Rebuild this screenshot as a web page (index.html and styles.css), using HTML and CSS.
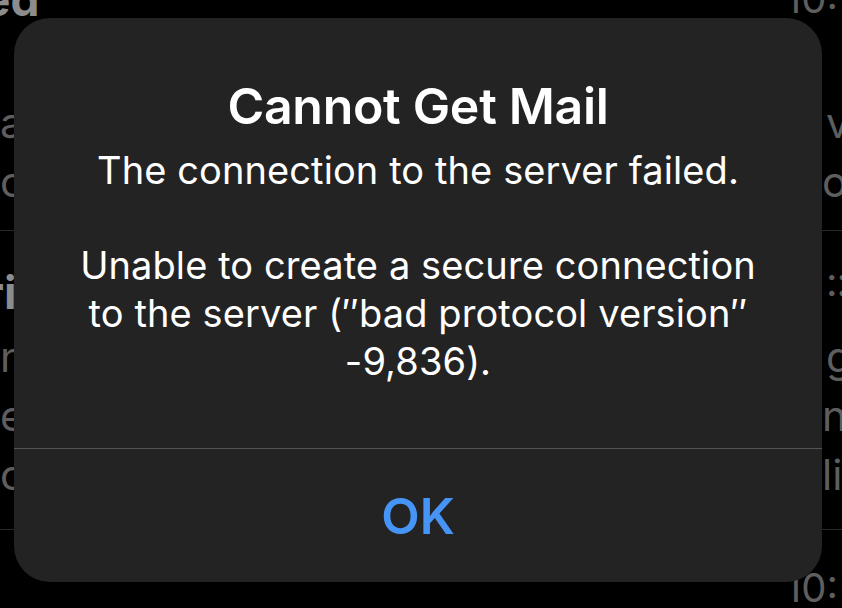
FILE: index.html
```html
<!DOCTYPE html>
<html lang="en">
<head>
<meta charset="utf-8">
<title>Cannot Get Mail</title>
<link rel="stylesheet" href="styles.css">
</head>
<body>
<div class="screen">
  <div class="list">
    <div class="mail mail-first">
      <div class="head"><span class="sender sender-first">ed</span><span class="time">10:</span></div>
      <div class="line"><span class="l"></span><span class="r"></span></div>
      <div class="line"><span class="l">a</span><span class="r r-v">v</span></div>
      <div class="line"><span class="l">o</span><span class="r">ol</span></div>
    </div>
    <div class="mail mail-second">
      <div class="head"><span class="sender sender-second">ri</span><span class="time time-colon">::</span></div>
      <div class="line"><span class="l">n</span><span class="r r-g">g</span></div>
      <div class="line"><span class="l">el</span><span class="r">n</span></div>
      <div class="line"><span class="l">c</span><span class="r">li</span></div>
    </div>
    <div class="mail mail-third">
      <div class="head"><span class="sender"></span><span class="time">10:</span></div>
    </div>
  </div>

  <div class="alert" role="alertdialog" aria-labelledby="alert-title">
    <div class="alert-body">
      <h1 class="alert-title" id="alert-title">Cannot Get Mail</h1>
      <p class="alert-msg">The connection to the server failed.<br><br>Unable to create a secure connection<br>to the server (″bad protocol version″<br>-9,836).</p>
    </div>
    <button class="alert-btn" type="button">OK</button>
  </div>
</div>
</body>
</html>
```

FILE: styles.css
```css
* { box-sizing: border-box; }

html, body {
  margin: 0;
  padding: 0;
  background: #000;
}

body {
  font-family: Inter, "Noto Sans", "Liberation Sans", sans-serif;
  overflow: hidden;
}

.screen {
  position: relative;
  width: 842px;
  height: 608px;
  overflow: hidden;
  background: #000;
}

/* ---------- mail list behind the alert ---------- */
.list {
  display: flex;
  flex-direction: column;
  margin-top: -31px;
}

.mail {
  display: flex;
  flex-direction: column;
  border-bottom: 1px solid #282828;
}

.mail-first { padding-bottom: 19px; }
.mail-second { padding-top: 31px; padding-bottom: 25px; }
.mail-third { padding-top: 28px; border-bottom: none; }

.head {
  display: flex;
  justify-content: space-between;
  align-items: flex-start;
  height: 60px;
  white-space: nowrap;
}

.sender {
  font-size: 46px;
  font-weight: 700;
  line-height: 60px;
  color: #8c8c8c;
}

.sender-first { margin-left: -17px; }
.sender-second { margin-left: -15px; }

.time {
  width: 57px;
  font-size: 40px;
  line-height: 60px;
  color: #5e5e5e;
  white-space: nowrap;
}

.time-colon {
  margin-top: -10px;
  width: 14px;
  letter-spacing: -1px;
  margin-right: 2px;
}

.line {
  display: flex;
  justify-content: space-between;
  height: 59px;
  margin-top: 5px;
  font-size: 42px;
  line-height: 59px;
  color: #5e5e5e;
  white-space: nowrap;
}

.line + .line { margin-top: 0; }

.l { width: 20px; }
.r { width: 20px; }
.r-v { padding-left: 4px; }
.r-g { padding-left: 4px; }

/* ---------- alert ---------- */
.alert {
  position: absolute;
  left: 14px;
  top: 18px;
  width: 808px;
  height: 564px;
  border-radius: 36px;
  background: #232323;
  display: flex;
  flex-direction: column;
  overflow: hidden;
}

.alert-body {
  height: 431px;
  padding-top: 58px;
  border-bottom: 1px solid #545454;
  text-align: center;
  color: #fff;
}

.alert-title {
  margin: 0;
  font-size: 50px;
  font-weight: 600;
  line-height: 60px;
  letter-spacing: -0.3px;
}

.alert-msg {
  margin: 11px 0 0;
  font-size: 38px;
  font-weight: 400;
  line-height: 47.7px;
  letter-spacing: 0.1px;
  white-space: nowrap;
}

.alert-btn {
  flex: 1;
  border: none;
  background: transparent;
  font-family: inherit;
  font-size: 50px;
  font-weight: 600;
  color: #4694f5;
  padding: 0;
  cursor: pointer;
}
```
